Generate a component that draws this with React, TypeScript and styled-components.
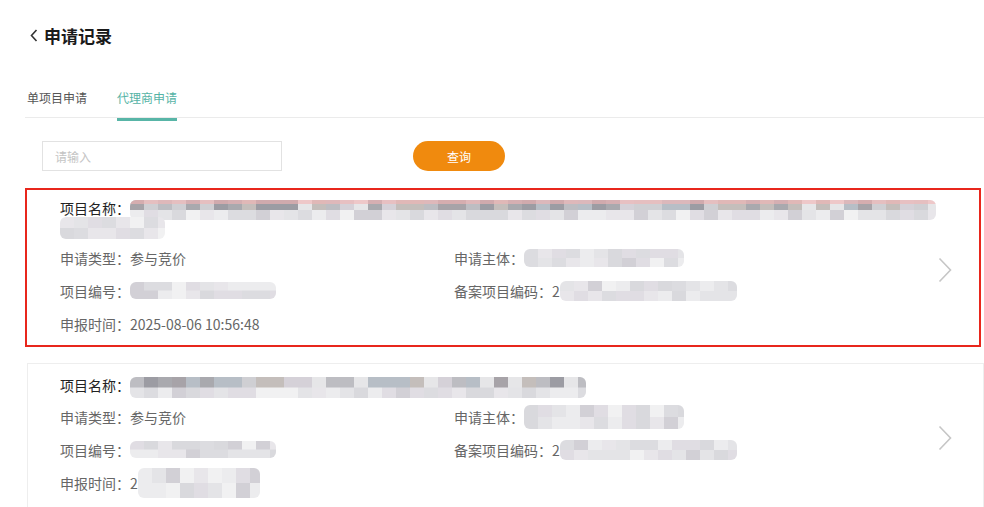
import React from "react";
import styled, { createGlobalStyle } from "styled-components";

const GlobalStyle = createGlobalStyle`
  html, body { margin: 0; padding: 0; background: #fff; }
  body { font-family: "Noto Sans CJK SC", "Noto Sans", sans-serif; color: #333; }
  * { box-sizing: border-box; }
`;

const Page = styled.div`
  width: 984px;
  height: 507px;
  overflow: hidden;
  padding-left: 25px;
`;

const Header = styled.div`
  height: 74px;
  display: flex;
  align-items: center;
  gap: 6px;
  padding: 0 0 4px 5px;
`;

const Title = styled.h1`
  margin: 0;
  font-size: 17px;
  font-weight: 700;
  line-height: 1;
  color: #1a1a1a;
`;

const TabBar = styled.div`
  height: 44px;
  display: flex;
  gap: 30px;
  padding-left: 2px;
  border-bottom: 1px solid #ebebeb;
`;

const Tab = styled.div<{ $active?: boolean }>`
  position: relative;
  padding-top: 14px;
  font-size: 12px;
  line-height: 20px;
  color: ${p => (p.$active ? "#55b3a5" : "#555")};
  cursor: pointer;

  &::after {
    content: "";
    display: ${p => (p.$active ? "block" : "none")};
    position: absolute;
    left: 0;
    right: 0;
    bottom: -4px;
    height: 3px;
    background: #58b5a7;
  }
`;

const SearchRow = styled.div`
  margin-top: 23px;
  display: flex;
  gap: 131px;
  padding-left: 17px;
`;

const SearchInput = styled.input`
  width: 240px;
  height: 30px;
  border: 1px solid #e2e2e2;
  padding: 0 12px;
  font-family: inherit;
  font-size: 12px;
  color: #333;
  outline: none;

  &::placeholder {
    color: #c4c4c4;
  }
`;

const SearchButton = styled.button`
  width: 92px;
  height: 30px;
  border: none;
  border-radius: 15px;
  background: #f08a0e;
  color: #fff;
  font-family: inherit;
  font-size: 12px;
  cursor: pointer;
`;

const CardList = styled.div`
  margin-top: 17px;
  padding-right: 3px;
  display: flex;
  flex-direction: column;
  gap: 16px;
`;

const Card = styled.div<{ $highlighted?: boolean }>`
  display: flex;
  border: ${p => (p.$highlighted ? "2px solid #e8261c" : "1px solid #eeeeee")};
  padding: ${p => (p.$highlighted ? "9px 27px 5px 33px" : "12px 31px 12px 32px")};
  margin: ${p => (p.$highlighted ? "0" : "0 -3px 0 2px")};
  background: #fff;
`;

const CardBody = styled.div`
  flex: 1;
  min-width: 0;
`;

const NameLine = styled.div`
  font-size: 14px;
  line-height: 18px;
  margin-bottom: 6px;
`;

const NameLabel = styled.span`
  color: #222;
`;

const FieldGrid = styled.div`
  display: grid;
  grid-template-columns: 394px 1fr;
  grid-auto-rows: 33px;
`;

const Field = styled.div`
  display: flex;
  align-items: center;
  font-size: 14px;
  color: #666;
  white-space: nowrap;
`;

const ArrowCell = styled.div`
  flex: none;
  display: flex;
  align-items: center;
`;

const MosaicBox = styled.span<{ $w: number; $h: number; $inline?: boolean }>`
  display: inline-block;
  width: ${p => p.$w}px;
  height: ${p => p.$h}px;
  vertical-align: middle;
  margin: ${p => (p.$inline ? "-4px 0" : "0")};
  border-radius: 6px;
  overflow: hidden;
  filter: blur(0.7px);

  svg {
    display: block;
  }
`;

const darkTones = ["#a9a9ae", "#bdbdc2", "#cfcfd3", "#9c9ca3", "#c4bebb", "#b7bec6", "#e6e6e8", "#d5d1d8", "#a7a3a8"];
const lightTones = ["#d9d9dd", "#e4e4e7", "#ececee", "#d2d0d6", "#e8e6ea", "#f1f1f2", "#dcdce0", "#e0dde3"];

function Mosaic({ w, h, seed, light, tint, inline }: { w: number; h: number; seed: number; light?: boolean; tint?: boolean; inline?: boolean }) {
  let s = seed * 7919 + 13;
  const next = () => {
    s = (s * 9301 + 49297) % 233280;
    return s / 233280;
  };
  const cell = 14;
  const cols = Math.ceil(w / cell);
  const rowH = h / 2;
  const cells: React.ReactNode[] = [];
  for (let c = 0; c < cols; c++) {
    const top = light ? lightTones : darkTones;
    cells.push(<rect key={`t${c}`} x={c * cell} y={0} width={cell} height={rowH + 1} fill={top[Math.floor(next() * top.length)]} />);
    cells.push(<rect key={`b${c}`} x={c * cell} y={rowH} width={cell} height={rowH} fill={lightTones[Math.floor(next() * lightTones.length)]} />);
  }
  return (
    <MosaicBox $w={w} $h={h} $inline={inline}>
      <svg width={w} height={h} viewBox={`0 0 ${w} ${h}`}>
        {cells}
        {tint && <rect x={0} y={0} width={w} height={4} fill="#f4b4b4" opacity={0.6} />}
      </svg>
    </MosaicBox>
  );
}

const BackIcon = () => (
  <svg width="8" height="13" viewBox="0 0 8 13">
    <polyline points="6.5,1 1.5,6.5 6.5,12" fill="none" stroke="#333" strokeWidth="1.6" />
  </svg>
);

const ChevronRight = () => (
  <svg width="14" height="26" viewBox="0 0 14 26">
    <polyline points="1.5,1.5 12.5,13 1.5,24.5" fill="none" stroke="#c6c6c6" strokeWidth="1.6" />
  </svg>
);

export default function App() {
  return (
    <>
      <GlobalStyle />
      <Page>
        <Header>
          <BackIcon />
          <Title>申请记录</Title>
        </Header>
        <TabBar>
          <Tab>单项目申请</Tab>
          <Tab $active>代理商申请</Tab>
        </TabBar>
        <SearchRow>
          <SearchInput placeholder="请输入" />
          <SearchButton>查询</SearchButton>
        </SearchRow>
        <CardList>
          <Card $highlighted>
            <CardBody>
              <NameLine>
                <NameLabel>项目名称：</NameLabel>
                <Mosaic w={806} h={20} seed={3} tint inline />
                <Mosaic w={105} h={22} seed={8} light inline />
              </NameLine>
              <FieldGrid>
                <Field>申请类型：参与竞价</Field>
                <Field>申请主体：<Mosaic w={160} h={18} seed={11} light /></Field>
                <Field>项目编号：<Mosaic w={146} h={17} seed={5} light /></Field>
                <Field>备案项目编码：2<Mosaic w={177} h={20} seed={21} light /></Field>
                <Field>申报时间：2025-08-06 10:56:48</Field>
              </FieldGrid>
            </CardBody>
            <ArrowCell>
              <ChevronRight />
            </ArrowCell>
          </Card>
          <Card>
            <CardBody>
              <NameLine>
                <NameLabel>项目名称：</NameLabel>
                <Mosaic w={456} h={21} seed={17} inline />
              </NameLine>
              <FieldGrid>
                <Field>申请类型：参与竞价</Field>
                <Field>申请主体：<Mosaic w={160} h={24} seed={29} light /></Field>
                <Field>项目编号：<Mosaic w={146} h={17} seed={33} light /></Field>
                <Field>备案项目编码：2<Mosaic w={177} h={20} seed={41} light /></Field>
                <Field>申报时间：2<Mosaic w={122} h={30} seed={47} light /></Field>
              </FieldGrid>
            </CardBody>
            <ArrowCell>
              <ChevronRight />
            </ArrowCell>
          </Card>
        </CardList>
      </Page>
    </>
  );
}
